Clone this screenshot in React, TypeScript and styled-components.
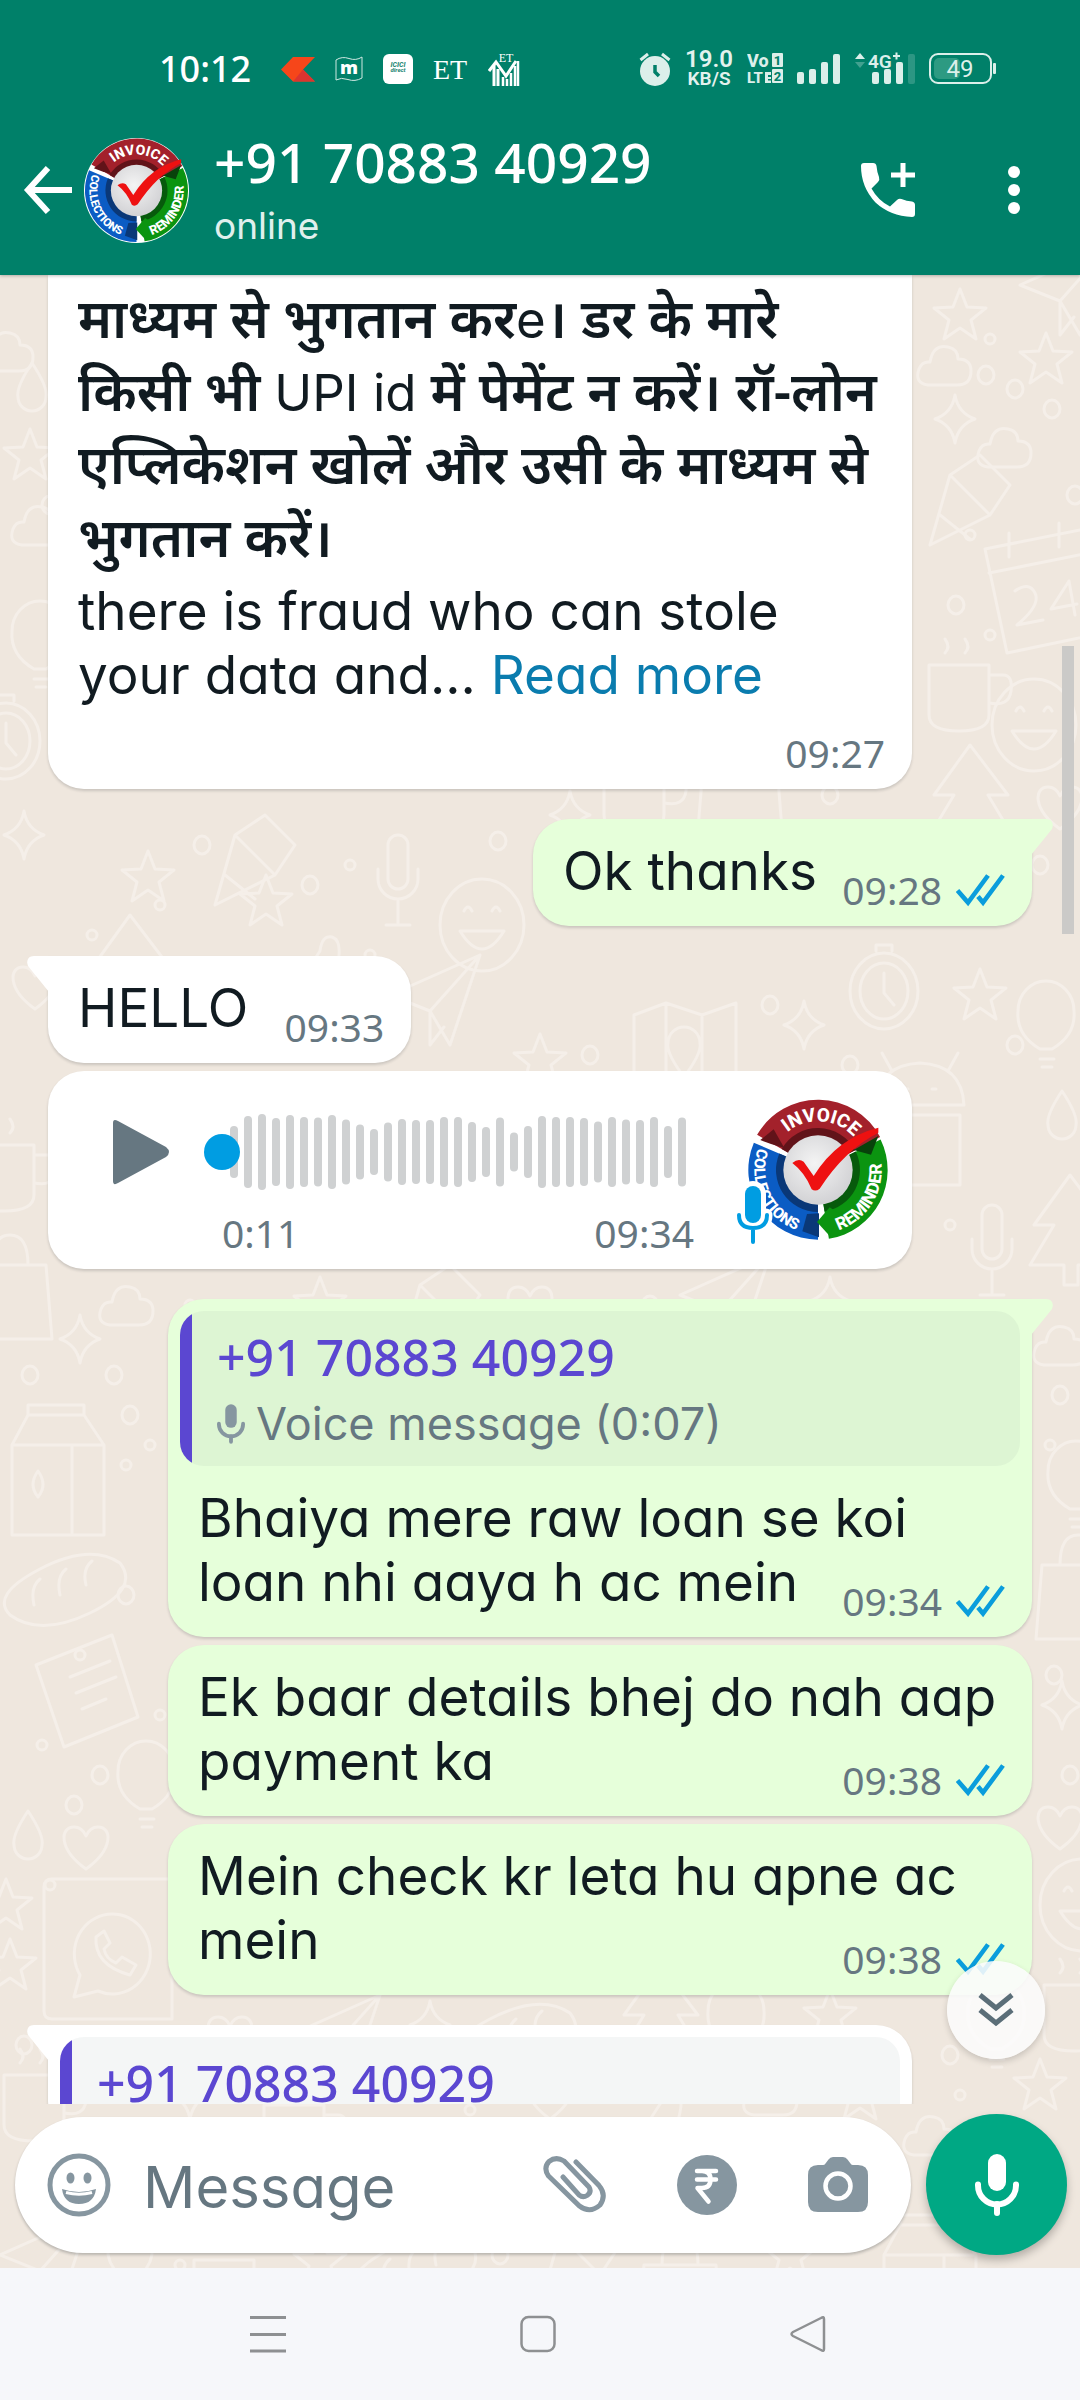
import React from "react";
import styled, { createGlobalStyle, css } from "styled-components";

const ui = `"Inter", "Noto Sans", sans-serif`;
const digits = `"Noto Sans", sans-serif`;

/* body type: single-storey "a" alternate switched on after the shorthand */
const uiText = (size: number, line: number) => css`
  font: 400 ${size}px/${line}px ${ui};
  font-feature-settings: "cv11";
`;

const Global = createGlobalStyle`
  * { box-sizing: border-box; }
  body { margin: 0; background: #efe7de; font-family: ${ui}; color: #111b21; }
  button { padding: 0; border: 0; background: none; color: inherit; font: inherit; cursor: pointer; }
  svg { display: block; flex: none; }
`;

const Screen = styled.div`
  display: flex;
  flex-direction: column;
  height: 100vh;
  overflow: hidden;
`;

/* ---------- header ---------- */

const Header = styled.header`
  background: #008069;
  color: #fff;
  position: relative;
  z-index: 1;
  box-shadow: 0 1px 3px rgba(0, 0, 0, 0.25);
`;

const StatusBar = styled.div`
  display: flex;
  justify-content: space-between;
  align-items: center;
  height: 105px;
  padding: 33px 84px 0 159px;
`;

const StatusGroup = styled.div<{ $gap: number }>`
  display: flex;
  align-items: center;
  gap: ${(p) => p.$gap}px;
`;

const Clock = styled.time`
  font: 500 36px/40px ${digits};
  margin-right: 10px;
`;

const NetSpeed = styled.div`
  display: flex;
  flex-direction: column;
  align-items: center;
  font: 600 19px/19px "Roboto", sans-serif;
  color: #e3f2ee;
`;

const SpeedValue = styled.span`
  font-size: 24px;
`;

const AppBar = styled.div`
  display: flex;
  align-items: center;
  height: 170px;
  padding: 0 50px 0 22px;
`;

const IconButton = styled.button`
  display: flex;
  align-items: center;
  justify-content: center;
  flex: none;
`;

const HeaderAvatar = styled.div`
  margin: 0 25px 0 10px;
`;

const Contact = styled.div`
  display: flex;
  flex-direction: column;
  gap: 8px;
  flex: 1;
`;

const ContactName = styled.h1`
  margin: 0;
  font: 500 55px/64px ${digits};
`;

const Presence = styled.p`
  margin: 0;
  ${uiText(37, 48)}
  color: #e0f0ed;
`;

const HeaderActions = styled.div`
  display: flex;
  align-items: center;
  gap: 82px;
`;

/* ---------- conversation ---------- */

const Chat = styled.main`
  position: relative;
  flex: 1;
  min-height: 0;
  display: flex;
  flex-direction: column;
`;

const Wallpaper = styled.svg`
  position: absolute;
  inset: 0;
  width: 100%;
  height: 100%;
`;

const Conversation = styled.section`
  position: relative;
  flex: 1;
  min-height: 0;
`;

const MessageList = styled.ol`
  list-style: none;
  margin: 0;
  padding: 0 48px;
  height: 100%;
  overflow: hidden;
  display: flex;
  flex-direction: column;
  gap: 8px;
`;

type Side = "in" | "out";

const Bubble = styled.li<{ $side: Side; $first?: boolean; $clipped?: boolean; $wide?: boolean }>`
  position: relative;
  display: flex;
  flex-direction: column;
  flex: none;
  align-self: ${(p) => (p.$side === "in" ? "flex-start" : "flex-end")};
  max-width: 864px;
  width: ${(p) => (p.$wide ? "864px" : "fit-content")};
  margin-top: ${(p) => (p.$first ? "22px" : "0")};
  border-radius: 36px;
  background: ${(p) => (p.$side === "in" ? "#fff" : "#e6ffda")};
  box-shadow: 0 2px 3px rgba(11, 20, 26, 0.16);
  ${(p) => p.$clipped && css`border-top-left-radius: 0; border-top-right-radius: 0;`}
  ${(p) => p.$first && (p.$side === "in" ? css`border-top-left-radius: 0;` : css`border-top-right-radius: 0;`)}
`;

const TailShape = styled.svg<{ $side: Side }>`
  position: absolute;
  top: 0;
  ${(p) => (p.$side === "in" ? css`left: -21px;` : css`right: -21px; transform: scaleX(-1);`)}
  fill: ${(p) => (p.$side === "in" ? "#fff" : "#e6ffda")};
`;

const Tail = ({ side }: { side: Side }) => (
  <TailShape $side={side} width="22" height="36" viewBox="0 0 22 36" aria-hidden="true">
    <path d="M22 0H7C1 0-1 5 1 10L22 36z" />
  </TailShape>
);

const Body = styled.div<{ $clipped?: boolean }>`
  display: flex;
  flex-direction: column;
  gap: ${(p) => (p.$clipped ? "6px" : "0")};
  padding: ${(p) => (p.$clipped ? "6px" : "20px")} 27px 16px 30px;
`;

const Text = styled.p`
  margin: 0;
  ${uiText(53, 64)}
`;

const Hindi = styled.p`
  margin: 0;
  font: 600 54px/73px "Noto Sans", sans-serif;
  white-space: nowrap;
`;

const Latin = styled.span`
  ${uiText(51, 51)}
`;

const MoreLink = styled.a`
  color: #0a7cae;
  text-decoration: none;
`;

/* keeps the last line of text clear of the time */
const MetaSpace = styled.span<{ $side: Side }>`
  display: inline-block;
  width: ${(p) => (p.$side === "in" ? "136px" : "188px")};
`;

const Meta = styled.span<{ $own?: boolean }>`
  display: flex;
  align-self: flex-end;
  align-items: center;
  gap: 14px;
  margin-top: ${(p) => (p.$own ? "20px" : "-33px")};
`;

const Time = styled.time`
  font: 400 39px/40px ${digits};
  color: #667781;
`;

const Ticks = () => (
  <svg width="49" height="34" viewBox="0 0 49 34" fill="none" stroke="#0a9ddc" strokeWidth="4.6" role="img" aria-label="Read">
    <path d="M1.5 17.5 12 29.5 32 2.5" strokeLinejoin="miter" />
    <path d="M22 23.5 27 29.5 47 2.5" />
  </svg>
);

const Quote = styled.blockquote<{ $side: Side }>`
  display: flex;
  flex-direction: column;
  gap: 9px;
  margin: 12px 12px 0;
  padding: 16px 26px 14px 37px;
  border-radius: 24px;
  background: linear-gradient(to right, #5b47d1 12px, ${(p) => (p.$side === "in" ? "#f4f6f6" : "#ddf5d3")} 12px);
`;

const QuoteName = styled.span`
  font: 500 50px/60px ${digits};
  color: #5b47d1;
`;

const QuoteLine = styled.span`
  display: flex;
  align-items: center;
  gap: 11px;
  ${uiText(45, 56)}
  color: #667781;
`;

/* ---------- voice note ---------- */

const VoiceRow = styled.div`
  display: flex;
  align-items: center;
  justify-content: space-between;
  padding-right: 23px;
`;

const Player = styled.div`
  display: grid;
  grid-template-columns: 56px 490px;
  column-gap: 35px;
  row-gap: 21px;
  padding: 41px 0 16px 65px;
`;

const Track = styled.div`
  position: relative;
  grid-column: 2;
  height: 80px;
`;

const Seek = styled.input`
  position: absolute;
  inset: 0;
  width: 100%;
  height: 100%;
  margin: 0;
  appearance: none;
  background: transparent;
  &::-webkit-slider-thumb {
    appearance: none;
    width: 36px;
    height: 36px;
    border-radius: 50%;
    background: #009de2;
  }
`;

const VoiceTimes = styled.div`
  grid-column: 2;
  display: flex;
  justify-content: space-between;
  padding-left: 18px;
`;

const VoiceAvatar = styled.div`
  position: relative;
`;

const MicBadge = styled.svg`
  position: absolute;
  left: -15px;
  bottom: -6px;
`;

/* ---------- overlays ---------- */

const Scrollbar = styled.div`
  position: absolute;
  top: 371px;
  right: 6px;
  width: 12px;
  height: 288px;
  background: #cbcac8;
`;

const JumpButton = styled.button`
  position: absolute;
  right: 35px;
  bottom: 45px;
  width: 98px;
  height: 98px;
  border-radius: 50%;
  display: flex;
  align-items: center;
  justify-content: center;
  background: rgba(252, 252, 252, 0.88);
  box-shadow: 0 3px 6px rgba(0, 0, 0, 0.16);
`;

/* ---------- composer ---------- */

const Composer = styled.form`
  position: relative;
  display: flex;
  align-items: center;
  gap: 15px;
  padding: 10px 13px 13px 15px;
`;

const InputPill = styled.div`
  flex: 1;
  min-width: 0;
  display: flex;
  align-items: center;
  height: 136px;
  padding: 0 43px 0 32px;
  border-radius: 68px;
  background: #fff;
  box-shadow: 0 2px 3px rgba(11, 20, 26, 0.24);
`;

const MessageInput = styled.input`
  flex: 1;
  min-width: 0;
  margin: 0 0 0 32px;
  padding: 4px 0 0;
  border: 0;
  outline: 0;
  background: none;
  ${uiText(58, 72)}
  color: #111b21;
  &::placeholder { color: #667781; opacity: 1; }
`;

const InputActions = styled.div`
  display: flex;
  align-items: center;
  gap: 71px;
`;

const MicButton = styled.button`
  display: flex;
  align-items: center;
  justify-content: center;
  flex: none;
  width: 141px;
  height: 141px;
  border-radius: 50%;
  background: #00a884;
  box-shadow: 0 5px 8px rgba(0, 0, 0, 0.25);
`;

const NavBar = styled.nav`
  display: flex;
  justify-content: center;
  align-items: center;
  gap: 234px;
  height: 132px;
  padding-right: 4px;
  background: #f6f7fa;
`;

/* ---------- drawings ---------- */

const C = { x: 265, y: 268 };
const at = (r: number, deg: number) => {
  const a = ((deg - 90) * Math.PI) / 180;
  return `${(C.x + r * Math.cos(a)).toFixed(1)} ${(C.y + r * Math.sin(a)).toFixed(1)}`;
};
const sector = (from: number, to: number, r: number, R: number) =>
  `M${at(R, from)}A${R} ${R} 0 0 1 ${at(R, to)}L${at(r, to)}A${r} ${r} 0 0 0 ${at(r, from)}z`;
const arc = (r: number, from: number, to: number) =>
  `M${at(r, from)}A${r} ${r} 0 0 ${to > from ? 1 : 0} ${at(r, to)}`;

const Badge = ({ size, id }: { size: number; id: string }) => (
  <svg width={size} height={size} viewBox="52 55 426 426" role="img" aria-label="Invoice, reminder, collections">
    <defs>
      <radialGradient id={`${id}g`} cx=".45" cy=".4" r=".65">
        <stop offset="0" stopColor="#f4f4f4" />
        <stop offset="1" stopColor="#cfcfd2" />
      </radialGradient>
      <path id={`${id}a`} d={arc(146, -72, 80)} />
      <path id={`${id}b`} d={arc(191, 320, 170)} />
      <path id={`${id}c`} d={arc(191, 190, 55)} />
    </defs>
    <circle cx={C.x} cy={C.y} r="213" fill="#fff" />
    <path d={sector(180, 293, 100, 209)} fill="#0b5cc4" />
    <path d={sector(180, 293, 100, 126)} fill="#0a3878" />
    <path d={sector(64, 171, 100, 209)} fill="#0b9410" />
    <path d={sector(64, 171, 100, 126)} fill="#075a0c" />
    <path d={sector(-60, 62, 100, 211)} fill="#a3212b" />
    <path d={sector(-60, 62, 100, 126)} fill="#611319" />
    <path d="M92 178 132 146 164 202 124 190z" fill="#611319" />
    <path d="M268 398 268 470 218 452 232 400z" fill="#0a3878" />
    <path d="M262 424 300 380 330 400 300 466z" fill="#0b9410" />
    <path d="M372 208 446 166 424 222z" fill="#08420b" />
    <circle cx={C.x} cy={C.y} r="104" fill={`url(#${id}g)`} />
    <path d="M188 247Q206 232 222 243L252 286Q322 172 446 141V156Q345 208 270 324Q258 334 246 326Q226 276 188 247z" fill="#ee1111" />
    <g fill="#fff" fontFamily="Roboto, sans-serif" fontWeight="800" textAnchor="middle">
      <text fontSize="57"><textPath href={`#${id}a`} startOffset="50%">INVOICE</textPath></text>
      <text fontSize="46"><textPath href={`#${id}b`} startOffset="50%">COLLECTIONS</textPath></text>
      <text fontSize="52"><textPath href={`#${id}c`} startOffset="50%">REMINDER</textPath></text>
    </g>
  </svg>
);

const Mic = ({ w, h, color }: { w: number; h: number; color: string }) => (
  <svg width={w} height={h} viewBox="0 0 44 62" fill={color} aria-hidden="true">
    <rect x="13" y="0" width="18" height="37" rx="9" />
    <path d="M3 30.500v1a19 19 0 0 0 38 0v-1" fill="none" stroke={color} strokeWidth="6" strokeLinecap="round" />
    <path d="M22 50v9" stroke={color} strokeWidth="6" strokeLinecap="round" />
  </svg>
);

const heights = [52, 72, 76, 68, 74, 70, 69, 74, 65, 55, 46, 59, 66, 64, 64, 70, 70, 60, 50, 69, 39, 52, 72, 70, 70, 68, 61, 70, 65, 64, 70, 52, 69];

const Waveform = () => (
  <svg width="490" height="80" viewBox="0 0 490 80" fill="#cfd1d2" aria-hidden="true">
    {heights.map((h, i) => (
      <rect key={i} x={26 + i * 14} y={40 - h / 2} width="8" height={h} rx="4" />
    ))}
  </svg>
);

const KiteLogo = () => (
  <svg width="34" height="25" viewBox="0 0 34 25" aria-hidden="true">
    <path d="M12 0h22L22 12.500 34 24.500H12L0 12.500z" fill="#f6461a" />
    <path d="M22 12.500 34 24.500H12z" fill="#dc3430" />
  </svg>
);

const FlagLogo = () => (
  <svg width="28" height="26" viewBox="0 0 28 26" aria-hidden="true">
    <path d="M1 4Q7 0 14 2.500T27 1V22Q20 26 13 23.500T1 24z" fill="none" stroke="#cfe8e2" />
    <text x="14" y="18" textAnchor="middle" fontFamily="Open Sans, sans-serif" fontWeight="800" fontSize="18" fill="#fff">m</text>
  </svg>
);

const DirectLogo = () => (
  <svg width="30" height="30" viewBox="0 0 30 30" aria-hidden="true">
    <rect width="30" height="30" rx="6" fill="#fff" />
    <g fill="#2a8a77" fontFamily="Roboto, sans-serif" fontWeight="800" fontStyle="italic" textAnchor="middle">
      <text x="15" y="13" fontSize="7">ICICI</text>
      <text x="15" y="18" fontSize="6">direct</text>
    </g>
  </svg>
);

const EtLogo = () => (
  <svg width="35" height="40" viewBox="0 0 35 40" aria-hidden="true">
    <text x="17" y="30" textAnchor="middle" fontFamily="Liberation Serif, serif" fontSize="28" fill="#fff">ET</text>
  </svg>
);

const MarketsLogo = () => (
  <svg width="32" height="36" viewBox="0 0 32 36" aria-hidden="true">
    <text x="18" y="11" textAnchor="middle" fontFamily="Liberation Serif, serif" fontSize="12" fill="#fff">ET</text>
    <path d="M1 20 8 11 18 25 28 10" fill="none" stroke="#fff" strokeWidth="3" />
    <path d="M6 14v21M10 18v17" stroke="#fff" strokeWidth="3" />
    <path d="M15 26v9M19 28v7M23 22v13M27 15v20M30 10v25" stroke="#fff" strokeWidth="2.500" />
  </svg>
);

const AlarmIcon = () => (
  <svg width="32" height="34" viewBox="0 0 32 34" aria-hidden="true">
    <circle cx="16" cy="19" r="15" fill="#dcefea" />
    <path d="M1.500 8 9 2M30.500 8 23 2" stroke="#dcefea" strokeWidth="3" />
    <path d="M16 13v7l4 4" fill="none" stroke="#008069" strokeWidth="3.500" />
  </svg>
);

const VolteIcon = () => (
  <svg width="36" height="40" viewBox="0 -3 36 40" fill="#dcefea" fontFamily="Roboto, sans-serif" fontWeight="800" aria-hidden="true">
    <text x="0" y="15" fontSize="18">Vo</text>
    <text x="0" y="31" fontSize="15">LT</text>
    <path d="M18 20h6v3h-3v2h3v2h-3v1.500h3v2.500h-6z" />
    <rect x="25" y="1" width="11" height="14" rx="1" />
    <rect x="25" y="17" width="11" height="14" rx="1" />
    <g fill="#008069" fontSize="13" textAnchor="middle">
      <text x="30.500" y="12.500">1</text>
      <text x="30.500" y="28.500">2</text>
    </g>
  </svg>
);

const SignalIcon = () => (
  <svg width="44" height="32" viewBox="0 0 44 32" fill="#dcefea" aria-hidden="true">
    <rect x="0" y="19" width="7" height="12" rx="2" />
    <rect x="12" y="16" width="7" height="15" rx="2" />
    <rect x="24" y="9" width="7" height="22" rx="2" />
    <rect x="36" y="1" width="7" height="30" rx="2" />
  </svg>
);

const DataIcon = () => (
  <svg width="60" height="36" viewBox="0 0 60 36" fill="#dcefea" aria-hidden="true">
    <path d="M0 8 5 2l5 6z" />
    <path d="M0 11l5 6 5-6z" opacity=".3" />
    <text x="13" y="17" fontFamily="Roboto, sans-serif" fontWeight="600" fontSize="19">4G</text>
    <path d="M38 5h7M41.500 1.500v7" stroke="#dcefea" strokeWidth="2" />
    <rect x="17" y="21" width="7" height="12" rx="2" />
    <rect x="29" y="18" width="7" height="15" rx="2" />
    <rect x="41" y="11" width="7" height="22" rx="2" />
    <rect x="53" y="3" width="7" height="30" rx="2" opacity=".2" />
  </svg>
);

const BatteryIcon = () => (
  <svg width="67" height="32" viewBox="0 0 67 32" aria-hidden="true">
    <rect x="1" y="1" width="61" height="29" rx="8" fill="none" stroke="#dcefea" strokeWidth="2" />
    <rect x="5" y="5" width="26" height="21" rx="5" fill="#2d9a82" />
    <rect x="64" y="10" width="3" height="11" rx="1" fill="#dcefea" />
    <text x="31" y="24" textAnchor="middle" fontFamily="Roboto, sans-serif" fontSize="24" fill="#dcefea">49</text>
  </svg>
);

/* small line drawings, each about 60 units wide */
const doodles: Record<string, string> = {
  star: "M30 4l7 18 19 1-15 12 5 19-16-11-16 11 5-19L4 23l19-1z",
  dot: "M22 30a8 9 0 1 0 16 0a8 9 0 1 0-16 0",
  small: "M25 30a5 5 0 1 0 10 0a5 5 0 1 0-10 0",
  spark: "M30 6q3 18 20 24q-17 6-20 24q-3-18-20-24q17-6 20-24z",
  heart: "M30 54C2 34 4 12 18 12q8 0 12 9q4-9 12-9c14 0 16 22-12 42z",
  cloud: "M14 50q-14-2-9-16q3-8 11-7q3-18 18-15q10 2 10 12q13 0 13 12q0 14-14 14z",
  drop: "M30 6q16 24 14 34a14 14 0 0 1-28 0q-2-10 14-34z",
  mic: "M22 10a10 10 0 0 1 20 0v34a10 10 0 0 1-20 0zM12 34v10a20 20 0 0 0 40 0V34M32 66v24M20 90h24",
  clock: "M0 46a34 38 0 1 0 68 0a34 38 0 1 0-68 0M10 46a24 28 0 1 0 48 0a24 28 0 1 0-48 0M34 28v20l10 12M26 6V0h16v6",
  map: "M4 14 36 2l36 12 34-12v108l-34 12-36-12L4 122zM36 2v108M72 14v108M54 76q-18-24-16-34a16 16 0 0 1 32 0q2 10-16 34z",
  android: "M6 60Q8 20 50 18q42 2 44 42zM22 26 12 8M78 26l10-18M34 44h4M62 44h4M10 70h80v70H10z",
  milk: "M4 40 20 10h56l20 30v90H4zM20 10V0h56v10M4 40h92M64 40v90M30 92q-10-12 0-26q10 14 0 26z",
  bread: "M10 70Q-10 50 40 24T120 18q20 26-30 50T10 70zM34 60q-4-18 6-26M60 50q-4-18 6-26M86 40q-4-16 6-24",
  note: "M0 30 76 0l26 82-74 30zM34 42l40-16M40 58l40-16M46 74l24-10",
  cup: "M4 20h60v50q0 16-30 16T4 70zM64 30h14q10 0 8 16T64 58M20 8q6-6 0-14M40 8q6-6 0-14",
  calendar: "M0 24 100 4l18 104-96 20zM4 48l100-20M24 8v24M74-2v24M30 66q14-10 20 2t-18 32l26-5M84 56L66 84l26-5M84 56l6 34",
  face: "M0 50a42 46 0 1 0 84 0a42 46 0 1 0-84 0M20 56q22 36 44 0zM24 36q4-8 8 0M52 36q4-8 8 0",
  phone: "M8 0h120v140H8q-8 0-8-8V8q0-8 8-8zM30 118l6-22a38 40 0 1 1 18 16zM52 58q-2 28 34 38l6-10-14-8-6 6q-10-4-12-14l6-6-6-12z",
  thumb: "M10 50h20l22-34q2-16 12-14q12 4 4 34h28q12 4 8 16q4 10-4 16q0 10-8 14q0 10-12 12H46q-10 0-16-6H10z",
  plane: "M0 40 90 0 60 90 40 56zM90 0 40 56M40 56v34l14-18",
  tree: "M40 0 4 50h20L0 90h34v20h14V90h34L58 50h20z",
  pencil: "M0 90 20 20 50 0l30 30-20 30zM20 20l40 40M10 60l30 24",
  bulb: "M30 74Q6 60 8 36a28 30 0 0 1 56 0q2 24-22 38zM30 84h14M32 92h10",
  bag: "M4 30h72l6 74H-2zM22 30q0-30 18-30t18 30",
};

const placed: [string, number, number][] = [
  ["cloud", -24, 46], ["drop", 2, 82], ["star", 0, 150], ["cloud", 8, 220], ["dot", 20, 200], ["bulb", 4, 320], ["clock", -28, 420],
  ["star", 930, 10], ["small", 960, 34], ["plane", 1020, -30], ["cloud", 914, 60], ["star", 1016, 54], ["dot", 956, 70], ["dot", 985, 84],
  ["spark", 925, 114], ["cloud", 974, 142], ["dot", 1022, 104], ["pencil", 930, 180], ["dot", 1045, 190], ["small", 940, 230], ["calendar", 985, 250],
  ["small", 960, 330], ["dot", 926, 300], ["cup", 925, 370], ["face", 992, 400], ["dot", 1010, 560], ["tree", 930, 470], ["heart", 1030, 500],
  ["spark", -6, 530], ["dot", 172, 540], ["pencil", 215, 540], ["mic", 366, 560], ["dot", 280, 580], ["small", 320, 560], ["dot", 468, 536],
  ["star", 118, 572], ["star", 236, 596], ["small", 62, 630], ["small", 130, 600], ["thumb", 268, 660], ["tree", 90, 640], ["dot", 190, 690], ["heart", 5, 680],
  ["plane", 390, 680], ["small", 340, 650], ["face", 440, 600], ["cup", 600, 470], ["spark", 540, 510], ["bag", 700, 450], ["dot", 800, 490], ["clock", 850, 670],
  ["dot", 480, 790], ["clock", 432, 810], ["star", 510, 755], ["dot", 560, 750], ["cloud", 556, 846], ["map", 630, 726], ["spark", 774, 720], ["dot", 820, 760], ["dot", 580, 800], ["small", 550, 786],
  ["star", 950, 690], ["dot", 985, 740], ["bulb", 1010, 700], ["android", 870, 770], ["drop", 1032, 810], ["heart", 790, 838], ["small", 920, 920], ["dot", 740, 700],
  ["bag", -30, 960], ["cup", -30, 850], ["mic", 960, 930], ["tree", 1030, 900], ["cloud", 1030, 1040], ["dot", 930, 1060],
  ["cloud", 96, 1000], ["small", 160, 1000], ["star", 290, 998], ["pencil", 400, 990], ["heart", 500, 1000], ["dot", 620, 1000], ["plane", 680, 980], ["spark", 800, 996],
  ["spark", 50, 1034], ["dot", 84, 1070], ["dot", 0, 1070], ["milk", 8, 1130], ["dot", 100, 1110], ["small", 96, 1160], ["small", 120, 1140],
  ["bread", 0, 1270], ["dot", 96, 1290], ["small", 50, 1350], ["note", 36, 1360], ["small", 130, 1410], ["small", 12, 1440],
  ["heart", 56, 1540], ["drop", -2, 1530], ["dot", 44, 1500], ["dot", 70, 1470], ["bulb", 110, 1460], ["small", 20, 1580], ["star", -24, 1600], ["phone", 44, 1604],
  ["star", -20, 1660], ["dot", -6, 1740], ["cup", 0, 1780], ["cloud", 90, 1760], ["heart", 200, 1730], ["plane", 290, 1720], ["spark", 400, 1720], ["bread", 450, 1720], ["tree", 620, 1690], ["bulb", 700, 1700], ["star", 800, 1710],
  ["dot", 1030, 1090], ["small", 1020, 1140], ["bulb", 1040, 1160], ["bag", 1038, 1260], ["dot", 1024, 1370], ["spark", 1032, 1400], ["dot", 1040, 1470], ["heart", 1030, 1520], ["face", 1040, 1580], ["cup", 1040, 1690], ["star", 1010, 1780],
  ["small", 930, 1790], ["cloud", 900, 1830], ["dot", 920, 1750], ["bulb", 960, 1700],
  ["plane", 0, 1940], ["heart", 100, 1955], ["small", 150, 1960], ["cup", 190, 1965], ["star", 290, 1956], ["bread", 350, 1950], ["dot", 470, 1950], ["pencil", 540, 1940], ["bag", 640, 1960], ["star", 760, 1950], ["milk", 880, 1940],
  ["spark", 160, 1790], ["cup", 260, 1810], ["small", 440, 1805], ["heart", 520, 1790], ["thumb", 610, 1810], ["cloud", 740, 1790], ["star", 830, 1790],
];

const Doodles = () => (
  <Wallpaper aria-hidden="true" fill="none" stroke="#f5efe9" strokeWidth="3" strokeLinejoin="round" strokeLinecap="round">
    {placed.map(([name, x, y], i) => (
      <path key={i} d={doodles[name]} transform={`translate(${x} ${y})`} />
    ))}
  </Wallpaper>
);

/* ---------- messages ---------- */

const Outgoing = ({ text, time, first, quote }: { text: string; time: string; first?: boolean; quote?: string }) => (
  <Bubble $side="out" $first={first} $wide={!!quote}>
    {first && <Tail side="out" />}
    {quote && (
      <Quote $side="out">
        <QuoteName>+91 70883 40929</QuoteName>
        <QuoteLine>
          <Mic w={28} h={40} color="#8696a0" />
          {quote}
        </QuoteLine>
      </Quote>
    )}
    <Body>
      <Text>{text}<MetaSpace $side="out" /></Text>
      <Meta><Time>{time}</Time><Ticks /></Meta>
    </Body>
  </Bubble>
);

export default function App() {
  return (
    <>
      <Global />
      <Screen>
        <Header>
          <StatusBar>
            <StatusGroup $gap={20}>
              <Clock>10:12</Clock>
              <KiteLogo />
              <FlagLogo />
              <DirectLogo />
              <EtLogo />
              <MarketsLogo />
            </StatusGroup>
            <StatusGroup $gap={14}>
              <AlarmIcon />
              <NetSpeed><SpeedValue>19.0</SpeedValue><span>KB/S</span></NetSpeed>
              <VolteIcon />
              <SignalIcon />
              <DataIcon />
              <BatteryIcon />
            </StatusGroup>
          </StatusBar>
          <AppBar>
            <IconButton aria-label="Back">
              <svg width="52" height="50" viewBox="0 0 52 50" fill="none" stroke="#fff" strokeWidth="6">
                <path d="M26 3 6 25l20 22M5 25h45" />
              </svg>
            </IconButton>
            <HeaderAvatar><Badge size={105} id="h" /></HeaderAvatar>
            <Contact>
              <ContactName>+91 70883 40929</ContactName>
              <Presence>online</Presence>
            </Contact>
            <HeaderActions>
              <IconButton aria-label="Add to call">
                <svg width="56" height="56" viewBox="0 0 56 56" fill="#fff">
                  <path d="M4 1h9q3 0 3.500 3 .5 6 2.500 11 1 3-1 5l-6.500 6.500q6.500 12 18.500 18L37 38q2-2 4.500-1 5 2 10.500 2.500 3 .5 3 3.500v9q0 3-3 3Q30 54 15.500 40.500 1 25 1 4q0-3 3-3z" />
                  <path d="M43 1v24M31 13h24" stroke="#fff" strokeWidth="5" />
                </svg>
              </IconButton>
              <IconButton aria-label="More options">
                <svg width="32" height="50" viewBox="0 0 32 50" fill="#fff">
                  <circle cx="16" cy="7" r="6" /><circle cx="16" cy="25" r="6" /><circle cx="16" cy="43" r="6" />
                </svg>
              </IconButton>
            </HeaderActions>
          </AppBar>
        </Header>

        <Chat>
          <Doodles />
          <Conversation>
            <MessageList>
              <Bubble $side="in" $clipped $wide>
                <Body $clipped>
                  <Hindi>
                    माध्यम से भुगतान कर<Latin>e</Latin>। डर के मारे<br />
                    किसी भी <Latin>UPI id</Latin> में पेमेंट न करें। रॉ-लोन<br />
                    एप्लिकेशन खोलें और उसी के माध्यम से<br />
                    भुगतान करें।
                  </Hindi>
                  <Text>there is fraud who can stole your data and... <MoreLink href="#more">Read more</MoreLink></Text>
                  <Meta $own><Time>09:27</Time></Meta>
                </Body>
              </Bubble>

              <Outgoing first text="Ok thanks" time="09:28" />

              <Bubble $side="in" $first>
                <Tail side="in" />
                <Body>
                  <Text>HELLO<MetaSpace $side="in" /></Text>
                  <Meta><Time>09:33</Time></Meta>
                </Body>
              </Bubble>

              <Bubble $side="in" $wide>
                <VoiceRow>
                  <Player>
                    <IconButton aria-label="Play voice message">
                      <svg width="56" height="66" viewBox="0 0 56 66" fill="#667781">
                        <path d="M0 4Q0-1 5 2L53 28Q59 33 53 38L5 64Q0 67 0 62z" />
                      </svg>
                    </IconButton>
                    <Track>
                      <Waveform />
                      <Seek type="range" min="0" max="11" defaultValue="0" aria-label="Position" />
                    </Track>
                    <VoiceTimes><Time>0:11</Time><Time>09:34</Time></VoiceTimes>
                  </Player>
                  <VoiceAvatar>
                    <Badge size={142} id="v" />
                    <MicBadge width="42" height="68" viewBox="0 0 42 68" aria-hidden="true">
                      <g fill="none" strokeLinecap="round">
                        <path d="M21 15v20" stroke="#fff" strokeWidth="26" />
                        <path d="M8 36q0 13 13 13t13-13M21 50v12" stroke="#fff" strokeWidth="13" />
                        <path d="M21 15v21" stroke="#009de2" strokeWidth="16" />
                        <path d="M7 36q0 13 14 13t14-13M21 50v13" stroke="#009de2" strokeWidth="4" />
                      </g>
                    </MicBadge>
                  </VoiceAvatar>
                </VoiceRow>
              </Bubble>

              <Outgoing first quote="Voice message (0:07)" text="Bhaiya mere raw loan se koi loan nhi aaya h ac mein" time="09:34" />
              <Outgoing text="Ek baar details bhej do nah aap payment ka" time="09:38" />
              <Outgoing text="Mein check kr leta hu apne ac mein" time="09:38" />

              <Bubble $side="in" $first $wide>
                <Tail side="in" />
                <Quote $side="in">
                  <QuoteName>+91 70883 40929</QuoteName>
                  <QuoteLine />
                </Quote>
              </Bubble>
            </MessageList>
            <Scrollbar />
            <JumpButton aria-label="Scroll to latest">
              <svg width="38" height="36" viewBox="0 0 38 36" fill="none" stroke="#5b6e78" strokeWidth="5">
                <path d="M3 3l16 13L35 3M3 18l16 13 16-13" />
              </svg>
            </JumpButton>
          </Conversation>

          <Composer onSubmit={(e) => e.preventDefault()}>
            <InputPill>
              <IconButton type="button" aria-label="Emoji">
                <svg width="64" height="64" viewBox="0 0 64 64" fill="#8696a0">
                  <circle cx="32" cy="32" r="29" fill="none" stroke="#8696a0" strokeWidth="5" />
                  <ellipse cx="23.500" cy="25" rx="4" ry="5.500" /><ellipse cx="40.500" cy="25" rx="4" ry="5.500" />
                  <path d="M15 36q17 6 34 0-2 15-17 15T15 36z" />
                  <path d="M19 39.500q13 3.500 26 0" stroke="#fff" strokeWidth="3" fill="none" />
                </svg>
              </IconButton>
              <MessageInput placeholder="Message" aria-label="Message" />
              <InputActions>
                <IconButton type="button" aria-label="Attach">
                  <svg width="63" height="57" viewBox="0 0 63 57" fill="none" stroke="#8696a0" strokeWidth="5" strokeLinecap="round">
                    <path d="M33 6 56 29.500Q64 39 57 49 47 58 36.500 50L5.500 20Q0 12 6 5.500 13 0 21 5L46 31Q49 36 44 39.500 40 42 36 39L20 21" />
                  </svg>
                </IconButton>
                <IconButton type="button" aria-label="Pay">
                  <svg width="60" height="60" viewBox="0 0 60 60">
                    <circle cx="30" cy="30" r="30" fill="#8696a0" />
                    <path d="M20 16h19M20 24.500h19M20 16h5q8.500 0 8.500 8.500T25 33h-4.500l11 13.500" fill="none" stroke="#fff" strokeWidth="4.500" strokeLinecap="round" strokeLinejoin="round" />
                  </svg>
                </IconButton>
                <IconButton type="button" aria-label="Camera">
                  <svg width="60" height="60" viewBox="0 0 60 60">
                    <path d="M10 10h5q1.500 0 2.500-1.500l3-4Q22 2 25 2h10q3 0 4.500 2.500l3 4Q43.500 10 45 10h5q10 0 10 10v27q0 10-10 10H10Q0 57 0 47V20Q0 10 10 10z" fill="#8696a0" />
                    <circle cx="30" cy="31" r="12.500" fill="none" stroke="#fff" strokeWidth="4.500" />
                  </svg>
                </IconButton>
              </InputActions>
            </InputPill>
            <MicButton type="button" aria-label="Record voice message"><Mic w={44} h={62} color="#fff" /></MicButton>
          </Composer>
        </Chat>

        <NavBar>
          <IconButton aria-label="Recent apps">
            <svg width="36" height="38" viewBox="0 0 36 38" stroke="#8e9092" strokeWidth="3"><path d="M0 2.500h36M0 19.500h36M0 36h36" /></svg>
          </IconButton>
          <IconButton aria-label="Home">
            <svg width="36" height="38" viewBox="0 0 36 38" fill="none" stroke="#8e9092" strokeWidth="2.500"><rect x="1.500" y="2" width="33" height="34" rx="7" /></svg>
          </IconButton>
          <IconButton aria-label="Back">
            <svg width="36" height="38" viewBox="0 0 36 38" fill="none" stroke="#8e9092" strokeWidth="2.500" strokeLinejoin="round"><path d="M34 4Q34 1 31 3L3 17Q0 19 3 21L31 35Q34 37 34 34z" /></svg>
          </IconButton>
        </NavBar>
      </Screen>
    </>
  );
}
